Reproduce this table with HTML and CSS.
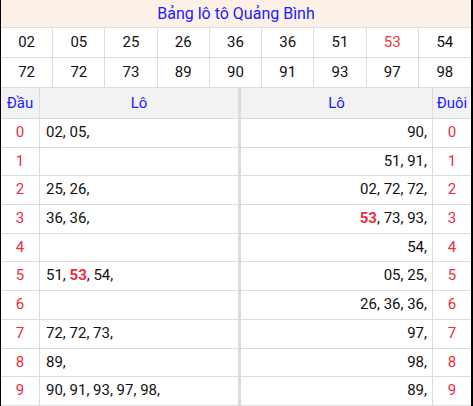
FILE: index.html
```html
<!DOCTYPE html>
<html lang="vi">
<head>
    <meta charset="UTF-8">
    <meta name="viewport" content="width=device-width, initial-scale=1.0">
    <title>Bảng lô tô Quảng Bình</title>
    <link rel="stylesheet" href="styles.css">
</head>
<body>
    <div class="board">
        <div class="title">Bảng lô tô Quảng Bình</div>

        <div class="numbers">
            <div class="num">02</div>
            <div class="num">05</div>
            <div class="num">25</div>
            <div class="num">26</div>
            <div class="num">36</div>
            <div class="num">36</div>
            <div class="num">51</div>
            <div class="num hot">53</div>
            <div class="num">54</div>

            <div class="num">72</div>
            <div class="num">72</div>
            <div class="num">73</div>
            <div class="num">89</div>
            <div class="num">90</div>
            <div class="num">91</div>
            <div class="num">93</div>
            <div class="num">97</div>
            <div class="num">98</div>
        </div>

        <div class="loto">
            <div class="head">Đầu</div>
            <div class="head lo-left">Lô</div>
            <div class="head">Lô</div>
            <div class="head">Đuôi</div>

            <div class="digit">0</div>
            <div class="lo lo-left">02, 05,</div>
            <div class="lo lo-right">90,</div>
            <div class="digit">0</div>

            <div class="digit">1</div>
            <div class="lo lo-left"></div>
            <div class="lo lo-right">51, 91,</div>
            <div class="digit">1</div>

            <div class="digit">2</div>
            <div class="lo lo-left">25, 26,</div>
            <div class="lo lo-right">02, 72, 72,</div>
            <div class="digit">2</div>

            <div class="digit">3</div>
            <div class="lo lo-left">36, 36,</div>
            <div class="lo lo-right"><b>53</b>, 73, 93,</div>
            <div class="digit">3</div>

            <div class="digit">4</div>
            <div class="lo lo-left"></div>
            <div class="lo lo-right">54,</div>
            <div class="digit">4</div>

            <div class="digit">5</div>
            <div class="lo lo-left">51, <b>53</b>, 54,</div>
            <div class="lo lo-right">05, 25,</div>
            <div class="digit">5</div>

            <div class="digit">6</div>
            <div class="lo lo-left"></div>
            <div class="lo lo-right">26, 36, 36,</div>
            <div class="digit">6</div>

            <div class="digit">7</div>
            <div class="lo lo-left">72, 72, 73,</div>
            <div class="lo lo-right">97,</div>
            <div class="digit">7</div>

            <div class="digit">8</div>
            <div class="lo lo-left">89,</div>
            <div class="lo lo-right">98,</div>
            <div class="digit">8</div>

            <div class="digit">9</div>
            <div class="lo lo-left">90, 91, 93, 97, 98,</div>
            <div class="lo lo-right">89,</div>
            <div class="digit">9</div>
        </div>
    </div>
</body>
</html>
```

FILE: styles.css
```css
* {
    margin: 0;
    padding: 0;
    box-sizing: border-box;
}

body {
    font-family: Roboto, 'Liberation Sans', Arial, sans-serif;
    font-size: 15px;
    color: #111;
    background: #fff;
}

.board {
    width: 473px;
    border-left: 1px solid #000;
    border-right: 2px solid #000;
    border-bottom: 2px solid #000;
}

.title {
    height: 28px;
    line-height: 27px;
    font-size: 16px;
    text-align: center;
    color: #1a1aff;
    background: #fdf1e7;
    border-bottom: 1px solid #dcdcdc;
}

.numbers {
    display: grid;
    grid-template-columns: repeat(9, 1fr);
}

.num {
    height: 30px;
    line-height: 29px;
    text-align: center;
    border-right: 1px solid #dcdcdc;
    border-bottom: 1px solid #dcdcdc;
}

.num:nth-child(9n) {
    border-right: none;
}

.num.hot {
    color: #ee3344;
}

.loto {
    display: grid;
    grid-template-columns: 39px 201px 192px 1fr;
    grid-template-rows: 31px;
    grid-auto-rows: 28.7px;
}

.loto > div {
    border-right: 1px solid #dcdcdc;
    border-bottom: 1px solid #dcdcdc;
    line-height: 27px;
    white-space: nowrap;
}

.loto > div:nth-child(4n) {
    border-right: none;
}

.loto .head {
    line-height: 30px;
    text-align: center;
    color: #1a1aff;
    background: #f2f2f2;
}

.loto .lo-left {
    border-right: 3px solid #dcdcdc;
}

.digit {
    text-align: center;
    color: #ee2a40;
}

.lo {
    padding: 0 6px;
}

.lo-right {
    text-align: right;
    padding-right: 5px;
}

.lo b {
    color: #ee2a40;
}
```
